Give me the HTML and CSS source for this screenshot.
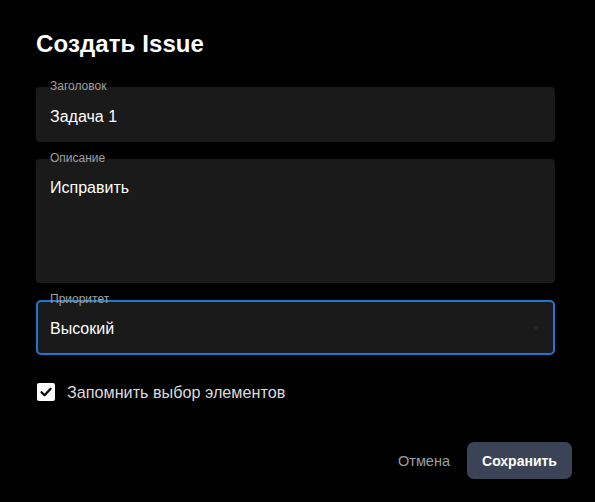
FILE: index.html
```html
<!DOCTYPE html>
<html lang="ru">
<head>
<meta charset="utf-8">
<link rel="stylesheet" href="styles.css">
</head>
<body>
<div class="dialog">
  <h2 class="title">Создать Issue</h2>
  <div class="fields">
    <div class="field">
      <span class="label">Заголовок</span>
      <div class="value">Задача 1</div>
    </div>
    <div class="field area">
      <span class="label">Описание</span>
      <div class="value">Исправить</div>
    </div>
    <div class="field select">
      <span class="label">Приоритет</span>
      <div class="value">Высокий</div>
      <span class="arrow"></span>
    </div>
  </div>
  <label class="check">
    <span class="box"><svg width="14" height="14" viewBox="0 0 14 14"><path d="M2.5 7.2 L5.6 10.2 L11.6 3.8" fill="none" stroke="#000" stroke-width="2.2" stroke-linecap="round" stroke-linejoin="round"/></svg></span>
    <span class="check-text">Запомнить выбор элементов</span>
  </label>
  <div class="actions">
    <button class="btn cancel">Отмена</button>
    <button class="btn save">Сохранить</button>
  </div>
</div>
</body>
</html>
```

FILE: styles.css
```css
html, body {
  margin: 0;
  padding: 0;
  background: #000;
  width: 595px;
  height: 502px;
  overflow: hidden;
  font-family: "Liberation Sans", Arial, sans-serif;
}
.dialog {
  box-sizing: border-box;
  width: 595px;
  height: 502px;
  padding: 30px 23px 0 36px;
  display: flex;
  flex-direction: column;
}
.title {
  margin: 0 0 30px 0;
  font-size: 24px;
  font-weight: bold;
  color: #fff;
  line-height: 27px;
  letter-spacing: 0.1px;
}
.fields {
  display: flex;
  flex-direction: column;
  gap: 17px;
  width: 519px;
}
.field {
  position: relative;
  box-sizing: border-box;
  height: 55px;
  background: #1a1a1a;
  border-radius: 4px;
  padding: 21px 14px 0 14px;
}
.field.area {
  height: 124px;
  padding-top: 20px;
}
.field.select {
  border: 2px solid #1e78d3;
  border-radius: 5px;
  padding: 18px 12px 0 12px;
}
.label {
  position: absolute;
  left: 14px;
  top: -8px;
  font-size: 12px;
  line-height: 14px;
  color: #a0a0a0;
}
.select .label {
  left: 12px;
  top: -10px;
}
.value {
  font-size: 16px;
  line-height: 18px;
  color: #fff;
}
.arrow {
  position: absolute;
  right: 13px;
  top: 24px;
  width: 0;
  height: 0;
  border-left: 4px solid transparent;
  border-right: 4px solid transparent;
  border-top: 4px solid #262626;
}
.check {
  display: flex;
  align-items: center;
  margin-top: 28px;
  margin-left: 1px;
  height: 18px;
}
.box {
  width: 18px;
  height: 18px;
  background: #fff;
  border-radius: 2px;
  display: flex;
  align-items: center;
  justify-content: center;
}
.check-text {
  margin-left: 12px;
  font-size: 16.2px;
  color: #dcdcdc;
}
.actions {
  display: flex;
  justify-content: flex-end;
  align-items: center;
  gap: 17px;
  margin-top: 41px;
}
.btn {
  font-family: "Liberation Sans", Arial, sans-serif;
  border: none;
  cursor: pointer;
  font-size: 14px;
}
.cancel {
  background: transparent;
  color: #9aa0a6;
  padding: 0;
  font-size: 14.5px;
}
.save {
  width: 105px;
  height: 37px;
  background: #3b4456;
  color: #fff;
  font-weight: bold;
  border-radius: 7px;
}
```
